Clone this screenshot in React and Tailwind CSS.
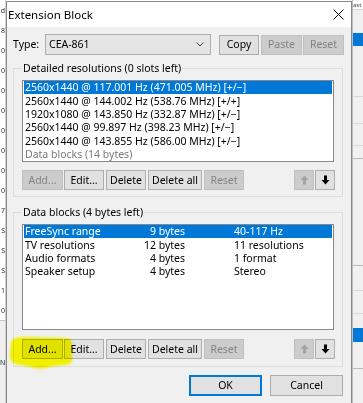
import React from 'react';

function Btn({ w, children, disabled, className = '' }) {
  return (
    <div
      className={`h-[20px] ${w} shrink-0 flex items-center justify-center border ${
        disabled ? 'bg-[#cccccc] border-[#bfbfbf] text-[#838383]' : 'bg-[#e1e1e1] border-[#adadad] text-black'
      } ${className}`}
    >
      {children}
    </div>
  );
}

function Arrow({ up, disabled }) {
  const color = disabled ? '#a3a3a3' : '#000000';
  return (
    <svg width="9" height="10" viewBox="0 0 9 10">
      {up ? (
        <path d="M4.5 0.5 L8.5 5 L6 5 L6 9.5 L3 9.5 L3 5 L0.5 5 Z" fill={color} />
      ) : (
        <path d="M4.5 9.5 L8.5 5 L6 5 L6 0.5 L3 0.5 L3 5 L0.5 5 Z" fill={color} />
      )}
    </svg>
  );
}

function ButtonRow({ addDisabled }) {
  return (
    <div className="flex items-center ml-[8px]">
      <Btn w="w-[41px]" disabled={addDisabled}>Add...</Btn>
      <Btn w="w-[40px]" className="ml-[1px]">Edit...</Btn>
      <Btn w="w-[40px]" className="ml-[2px]">Delete</Btn>
      <Btn w="w-[54px]" className="ml-[2px]">Delete all</Btn>
      <Btn w="w-[40px]" className="ml-[2px]" disabled>Reset</Btn>
      <Btn w="w-[20px]" className="ml-[50px]" disabled><Arrow up disabled /></Btn>
      <Btn w="w-[20px]" className="ml-[1px]"><Arrow /></Btn>
    </div>
  );
}

const resolutions = [
  '2560x1440 @ 117.001 Hz (471.005 MHz) [+/−]',
  '2560x1440 @ 144.002 Hz (538.76 MHz) [+/+]',
  '1920x1080 @ 143.850 Hz (332.87 MHz) [+/−]',
  '2560x1440 @ 99.897 Hz (398.23 MHz) [+/−]',
  '2560x1440 @ 143.855 Hz (586.00 MHz) [+/−]',
];

const blocks = [
  ['FreeSync range', '9 bytes', '40-117 Hz'],
  ['TV resolutions', '12 bytes', '11 resolutions'],
  ['Audio formats', '4 bytes', '1 format'],
  ['Speaker setup', '4 bytes', 'Stereo'],
];

const leftChars = ['d', '8', '0', '0', '0', '0', '0', '0', '0', '0', '7', 'S', 'S', 'S', '1', '0'];

export default function App() {
  return (
    <div className="w-[363px] h-[403px] relative overflow-hidden flex bg-white font-['Noto_Sans','Liberation_Sans',sans-serif] text-[10.5px] text-black leading-none">
      {/* background window, left */}
      <div className="w-[6px] shrink-0 flex flex-col overflow-hidden border-r border-[#d0d0d0] text-[7px] text-[#1a2a40]">
        <div className="h-[20px] flex items-center justify-end">d</div>
        {leftChars.slice(1).map((c, i) => (
          <div key={i} className="h-[20px] flex items-center justify-end">{c}</div>
        ))}
        <div className="flex-1 bg-[#f0f0f0] border-t border-[#c8c8c8] flex items-center">N</div>
      </div>

      {/* dialog */}
      <div className="w-[346px] shrink-0 mt-[1px] border border-b-0 border-[#8a8a8a] bg-[#f0f0f0] flex flex-col relative">
        <div className="h-[25px] bg-white flex items-center justify-between pl-[1px] pr-[7px]">
          <span className="text-[11.5px]">Extension Block</span>
          <svg width="11" height="11" viewBox="0 0 11 11">
            <path d="M0.5 0.5 L10.5 10.5 M10.5 0.5 L0.5 10.5" stroke="#000" strokeWidth="1" />
          </svg>
        </div>

        {/* type row */}
        <div className="flex items-center mt-[7px] pl-[6px]">
          <span className="w-[32px]">Type:</span>
          <div className="w-[166px] h-[21px] bg-[#e5e5e5] border border-[#adadad] flex items-center justify-between pl-[3px] pr-[6px]">
            <span>CEA-861</span>
            <svg width="8" height="5" viewBox="0 0 8 5">
              <path d="M0.5 0.5 L4 4 L7.5 0.5" stroke="#404040" fill="none" strokeWidth="1" />
            </svg>
          </div>
          <Btn w="w-[40px]" className="ml-[8px] h-[19px]">Copy</Btn>
          <Btn w="w-[41px]" className="ml-[2px] h-[19px]" disabled>Paste</Btn>
          <Btn w="w-[41px]" className="ml-[1px] h-[19px]" disabled>Reset</Btn>
        </div>

        {/* detailed resolutions */}
        <fieldset className="w-[330px] ml-[6px] mt-[6px] border border-[#dcdcdc] pb-[6px]">
          <legend className="ml-[8px] px-[1px] leading-[14px]">Detailed resolutions (0 slots left)</legend>
          <div className="ml-[8px] mt-[5px] w-[312px] h-[82px] bg-white border border-[#828790] px-[1px] flex flex-col">
            {resolutions.map((r, i) => (
              <div
                key={r}
                className={`h-[13.33px] shrink-0 flex items-center pl-[1px] ${i === 0 ? 'bg-[#0078d7] text-white' : ''}`}
              >
                {r}
              </div>
            ))}
            <div className="h-[13.33px] shrink-0 flex items-center pl-[1px] text-[#7a7a7a]">Data blocks (14 bytes)</div>
          </div>
          <div className="mt-[8px]">
            <ButtonRow addDisabled />
          </div>
        </fieldset>

        {/* data blocks */}
        <fieldset className="w-[330px] ml-[6px] mt-[8px] border border-[#dcdcdc] pb-[7px]">
          <legend className="ml-[8px] px-[1px] leading-[14px]">Data blocks (4 bytes left)</legend>
          <div className="ml-[8px] mt-[5px] w-[312px] h-[106px] bg-white border border-[#828790] px-[1px] flex flex-col">
            {blocks.map(([name, size, info], i) => (
              <div
                key={name}
                className={`h-[13.33px] shrink-0 flex items-center pl-[1px] ${i === 0 ? 'bg-[#0078d7] text-white' : ''}`}
              >
                <span className="w-[110px]">{name}</span>
                <span className="w-[50px] text-right">{size}</span>
                <span className="ml-[49px]">{info}</span>
              </div>
            ))}
          </div>
          <div className="mt-[9px]">
            <ButtonRow />
          </div>
        </fieldset>

        {/* dialog buttons */}
        <div className="flex mt-[8px] ml-[182px]">
          <div className="w-[73px] h-[21px] bg-[#e1e1e1] border-2 border-[#0078d7] flex items-center justify-center">OK</div>
          <div className="w-[73px] h-[21px] ml-[8px] bg-[#e1e1e1] border border-[#adadad] flex items-center justify-center">Cancel</div>
        </div>

        {/* highlighter mark */}
        <svg className="absolute left-[1px] top-[332px] mix-blend-multiply pointer-events-none" width="75" height="38" viewBox="0 0 75 38">
          <defs>
            <filter id="soft" x="-10%" y="-10%" width="120%" height="120%">
              <feGaussianBlur stdDeviation="0.8" />
            </filter>
          </defs>
          <path
            d="M3 8 C4 4 10 3 20 3 L55 4 C62 4 64 6 64 10 L64 26 C64 30 60 31 55 31 L45 32 C40 34 34 35 26 34 C20 33 18 31 12 31 C5 30 2 27 2 22 Z"
            fill="#ffff00"
            filter="url(#soft)"
          />
        </svg>
      </div>

      {/* background window, right */}
      <div className="flex-1 flex flex-col bg-[#f0f0f0] border-l border-[#bdbdbd]">
        <div className="h-[10px] bg-white border-b border-[#d6d6d6] text-[#444] text-[6px] overflow-hidden flex items-center">
          ast
        </div>
        <div className="h-[23px]" />
        <div className="h-[13px] bg-[#0078d7]" />
        <div className="h-[50px]" />
        <div className="h-[27px] border-t border-[#d8d8d8]" />
        <div className="h-[22px] border-t border-[#d8d8d8]" />
        <div className="h-[13px] border-t border-[#d8d8d8]" />
        <div className="h-[107px] border-t border-[#b8b8b8]" />
        <div className="h-[25px] border-t border-[#b8b8b8]" />
        <div className="h-[23px] border-t border-[#d8d8d8]" />
        <div className="h-[15px] border-t border-[#d8d8d8]" />
        <div className="h-[14px] bg-[#0078d7]" />
        <div className="h-[26px]" />
        <div className="flex-1 border-t border-[#b8b8b8]" />
      </div>
    </div>
  );
}
